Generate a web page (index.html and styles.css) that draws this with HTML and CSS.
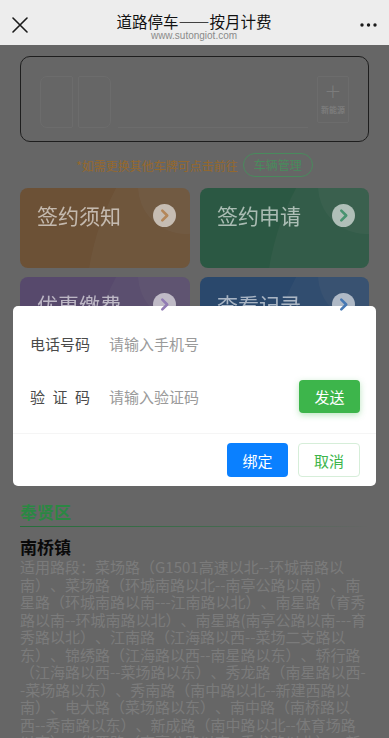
FILE: index.html
```html
<!DOCTYPE html>
<html lang="zh-CN">
<head>
<meta charset="utf-8">
<meta name="viewport" content="width=device-width, initial-scale=1">
<title>道路停车——按月计费</title>
<link rel="stylesheet" href="styles.css">
</head>
<body>
<header class="nav">
  <svg class="nav-close" width="16" height="16" viewBox="0 0 16 16"><path d="M1 1L15 15M15 1L1 15" stroke="#1a1a1a" stroke-width="1.6" fill="none" stroke-linecap="round"/></svg>
  <div class="nav-title">
    <div class="nav-t1">道路停车——按月计费</div>
    <div class="nav-t2">www.sutongiot.com</div>
  </div>
  <svg class="nav-more" width="18" height="6" viewBox="0 0 18 6"><circle cx="2" cy="3" r="1.7" fill="#1a1a1a"/><circle cx="8.5" cy="3" r="1.7" fill="#1a1a1a"/><circle cx="15" cy="3" r="1.7" fill="#1a1a1a"/></svg>
</header>

<main class="page">
  <div class="plate">
    <div class="cell cell-a"></div>
    <div class="cell cell-b"></div>
    <div class="cells-rest">
      <div class="u"></div><div class="u"></div><div class="u"></div><div class="u"></div><div class="u"></div>
    </div>
    <div class="cell-new"><span class="plus">+</span><span class="new-txt">新能源</span></div>
  </div>

  <div class="hint"><span class="hint-txt">*如需更换其他车牌可点击前往</span><span class="pill">车辆管理</span></div>

  <div class="cards">
    <div class="card c-orange"><span class="card-t">签约须知</span><svg class="arrow" width="23" height="23" viewBox="0 0 23 23"><circle cx="11.5" cy="11.5" r="11.5" fill="rgba(255,255,255,0.6)"/><path d="M9.3 6.6L14.2 11.5L9.3 16.4" stroke="currentColor" stroke-width="2.6" fill="none" stroke-linecap="round" stroke-linejoin="round"/></svg></div>
    <div class="card c-green"><span class="card-t">签约申请</span><svg class="arrow" width="23" height="23" viewBox="0 0 23 23"><circle cx="11.5" cy="11.5" r="11.5" fill="rgba(255,255,255,0.6)"/><path d="M9.3 6.6L14.2 11.5L9.3 16.4" stroke="currentColor" stroke-width="2.6" fill="none" stroke-linecap="round" stroke-linejoin="round"/></svg></div>
    <div class="card c-purple"><span class="card-t">优惠缴费</span><svg class="arrow" width="23" height="23" viewBox="0 0 23 23"><circle cx="11.5" cy="11.5" r="11.5" fill="rgba(255,255,255,0.6)"/><path d="M9.3 6.6L14.2 11.5L9.3 16.4" stroke="currentColor" stroke-width="2.6" fill="none" stroke-linecap="round" stroke-linejoin="round"/></svg></div>
    <div class="card c-blue"><span class="card-t">查看记录</span><svg class="arrow" width="23" height="23" viewBox="0 0 23 23"><circle cx="11.5" cy="11.5" r="11.5" fill="rgba(255,255,255,0.6)"/><path d="M9.3 6.6L14.2 11.5L9.3 16.4" stroke="currentColor" stroke-width="2.6" fill="none" stroke-linecap="round" stroke-linejoin="round"/></svg></div>
  </div>

  <section class="area">
    <h2 class="area-title">奉贤区</h2>
    <h3 class="town">南桥镇</h3>
    <p class="roads">适用路段：菜场路（G1501高速以北--环城南路以南）、菜场路（环城南路以北--南亭公路以南）、南星路（环城南路以南---江南路以北）、南星路（育秀路以南--环城南路以北）、南星路(南亭公路以南---育秀路以北）、江南路（江海路以西--菜场二支路以东）、锦绣路（江海路以西--南星路以东）、轿行路（江海路以西--菜场路以东）、秀龙路（南星路以西--菜场路以东）、秀南路（南中路以北--新建西路以南）、电大路（菜场路以东）、南中路（南桥路以西--秀南路以东）、新成路（南中路以北--体育场路以南）、华严路（南亭公路以南--秀龙路以北）、新建西路（南星路以西--菜场路以东）</p>
  </section>
</main>

<div class="mask"></div>

<div class="dialog">
  <div class="row">
    <span class="label">电话号码</span>
    <input class="field" type="text" placeholder="请输入手机号">
  </div>
  <div class="row">
    <span class="label label-just">验证码</span>
    <input class="field" type="text" placeholder="请输入验证码">
    <button class="btn btn-send">发送</button>
  </div>
  <div class="dialog-foot">
    <button class="btn btn-bind">绑定</button>
    <button class="btn btn-cancel">取消</button>
  </div>
</div>
</body>
</html>
```

FILE: styles.css
```css
* { box-sizing: border-box; }

html, body {
  margin: 0;
  padding: 0;
}

body {
  background: #aaaaaa;
  font-family: "Noto Sans CJK SC", "Noto Sans", sans-serif;
  color: #1a1a1a;
  text-spacing-trim: space-all;
}

/* ---------- nav bar ---------- */
.nav {
  height: 45px;
  background: #ededed;
  display: flex;
  align-items: flex-start;
  justify-content: space-between;
  padding: 0 11px 0 12px;
}

.nav-close {
  margin-top: 17px;
  flex: none;
}

.nav-more {
  margin-top: 22px;
  flex: none;
}

.nav-title {
  flex: 1;
  text-align: center;
  padding-top: 12px;
}

.nav-t1 {
  font-size: 15.5px;
  line-height: 18px;
  color: #111;
}

.nav-t2 {
  font-family: "Liberation Sans", Arial, sans-serif;
  font-size: 10px;
  line-height: 11px;
  margin-top: 0;
  color: #8a8a8a;
}

/* ---------- page ---------- */
.page {
  padding: 11px 20px 40px;
}

.plate {
  height: 86px;
  border: 1px solid #333333;
  border-radius: 10px;
  display: flex;
  align-items: flex-start;
  padding: 19px 19px 0;
}

.cell {
  width: 33px;
  height: 52px;
  border: 1px solid #b4b4b4;
  flex: none;
}

.cell-a { border-radius: 7px 2px 2px 7px; }
.cell-b { border-radius: 2px 7px 7px 2px; margin-left: 5px; }

.cells-rest {
  display: flex;
  margin-left: 7px;
  height: 52px;
  flex: none;
}

.u {
  width: 38px;
  height: 52px;
  border-bottom: 1px solid #b4b4b4;
}

.cell-new {
  flex: none;
  width: 32px;
  height: 47px;
  margin-left: 9px;
  border: 1px solid #b4b4b4;
  border-radius: 2px;
  display: flex;
  flex-direction: column;
  align-items: center;
  color: #cfcfcf;
}

.plus {
  font-family: "DejaVu Sans", sans-serif;
  font-weight: 200;
  font-size: 20px;
  line-height: 20px;
  margin-top: 4px;
}

.new-txt {
  font-size: 8px;
  line-height: 10px;
  margin-top: 4px;
  font-weight: 700;
}

.hint {
  margin-top: 11px;
  display: flex;
  justify-content: center;
  align-items: center;
  gap: 5px;
}

.hint-txt {
  font-size: 12px;
  color: #f7ae4c;
}

.pill {
  height: 24px;
  line-height: 22px;
  padding: 0 10px;
  border: 1px solid #7be69b;
  border-radius: 12px;
  font-size: 12px;
  color: #7be69b;
}

.cards {
  margin-top: 11px;
  display: grid;
  grid-template-columns: 170px 169px;
  column-gap: 10px;
  row-gap: 9px;
}

.card {
  position: relative;
  overflow: hidden;
  height: 80px;
  border-radius: 8px;
  display: flex;
  justify-content: space-between;
  align-items: flex-start;
  padding: 14px 14px 0 17px;
}

.card::before {
  content: "";
  position: absolute;
  width: 508px;
  height: 508px;
  left: 66px;
  top: -134px;
  border-radius: 50%;
  background: rgba(255, 255, 255, 0.07);
}

.card::after {
  content: "";
  position: absolute;
  width: 96px;
  height: 96px;
  left: 118px;
  top: -50px;
  border-radius: 50%;
  background: rgba(255, 255, 255, 0.07);
}

.card-t {
  position: relative;
  z-index: 1;
  font-size: 21px;
  line-height: 26px;
  color: rgba(255, 255, 255, 0.6);
}

.arrow {
  position: relative;
  z-index: 1;
  margin-top: 1.5px;
  flex: none;
}

.c-orange { background: #b4875a; color: #b4875a; }
.c-green  { background: #499370; color: #499370; }
.c-purple { background: #917bb4; color: #917bb4; }
.c-blue   { background: #4678b4; color: #4678b4; }

.area {
  margin-top: 144px;
}

.area-title {
  margin: 0;
  font-size: 17px;
  line-height: 22px;
  font-weight: 700;
  color: #49e270;
}

.area-title::after {
  content: "";
  display: block;
  height: 1.5px;
  margin-top: 2.5px;
  background: linear-gradient(90deg, #3fba62 0%, rgba(63, 186, 98, 0.5) 60%, rgba(63, 186, 98, 0) 100%);
}

.town {
  margin: 9px 0 0;
  font-size: 17px;
  line-height: 21px;
  font-weight: 700;
  color: #111;
}

.roads {
  margin: 1px 0 0;
  font-size: 15px;
  line-height: 17.5px;
  color: #cdcdcd;
}

/* ---------- modal ---------- */
.mask {
  position: fixed;
  top: 45px;
  left: 0;
  right: 0;
  bottom: 0;
  background: rgba(0, 0, 0, 0.4);
}

.dialog {
  position: fixed;
  top: 306px;
  left: 13px;
  width: 363px;
  height: 180px;
  background: #ffffff;
  border-radius: 5px;
  padding-top: 11px;
}

.row {
  height: 53px;
  display: flex;
  align-items: center;
  padding: 0 16px 0 17px;
}

.label {
  width: 60px;
  flex: none;
  font-size: 15px;
  color: #4a4a4a;
}

.label-just {
  text-align: justify;
  text-align-last: justify;
}

.field {
  flex: 1;
  min-width: 0;
  margin-left: 19px;
  border: none;
  outline: none;
  padding: 0;
  background: transparent;
  font-family: "Noto Sans CJK SC", "Noto Sans", sans-serif;
  font-size: 15px;
  color: #333;
}

.field::placeholder {
  color: #9a9a9a;
}

.btn {
  flex: none;
  width: 61px;
  height: 34px;
  border-radius: 4px;
  border: 1px solid transparent;
  padding: 0;
  font-family: "Noto Sans CJK SC", "Noto Sans", sans-serif;
  font-size: 15px;
  cursor: pointer;
}

.btn-send {
  height: 33px;
  background: #3db54b;
  color: #ffffff;
  box-shadow: 0 2px 6px rgba(61, 181, 75, 0.35);
}

.dialog-foot {
  margin-top: 10px;
  border-top: 1px solid #f5f5f5;
  padding: 9px 16px 9px;
  display: flex;
  justify-content: flex-end;
  gap: 10px;
}

.btn-bind {
  background: #0a80ff;
  color: #ffffff;
}

.btn-cancel {
  width: 62px;
  background: #ffffff;
  border-color: #d6eed9;
  color: #3db54b;
}
```
